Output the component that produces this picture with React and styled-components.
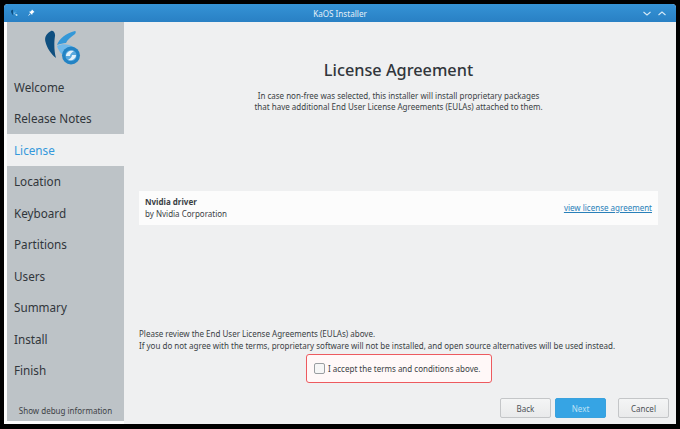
import React from 'react';
import styled, { createGlobalStyle } from 'styled-components';

const Global = createGlobalStyle`
  html, body { margin: 0; padding: 0; background: #000; }
  body { width: 680px; height: 429px; overflow: hidden; font-family: "Noto Sans", "Open Sans", sans-serif; color: #31363b; }
  * { box-sizing: border-box; }
`;
const Screen = styled.div`
  width: 680px; height: 429px; padding: 4px 4px 5px 4px; background: #000;
`;
const Win = styled.div`
  width: 672px; height: 420px; display: flex; flex-direction: column;
  border-radius: 4px 4px 0 0; overflow: hidden; background: #eff0f1;
`;
const TitleBar = styled.div`
  height: 18px; flex: none; display: flex; align-items: center; padding: 0 10px 0 7px;
  background: linear-gradient(#3593d6, #2980c4); color: #e4f0f8; font-size: 8.1px;
`;
const TitleText = styled.div`
  flex: 1; text-align: center; padding-left: 2px;
`;
const TitleIcons = styled.div`
  display: flex; align-items: center; gap: ${p => p.$gap}px;
`;
const Body = styled.div`
  flex: 1; display: flex; min-height: 0; padding: 0 0 3px 3px; background: #fcfcfc;
`;
const Sidebar = styled.div`
  width: 117px; flex: none; background: #bdc3c7; display: flex; flex-direction: column;
`;
const LogoWrap = styled.div`
  height: 49px; display: flex; justify-content: center; align-items: flex-start; padding: 6px 3px 0 0;
`;
const NavItem = styled.div`
  height: 31.5px; display: flex; align-items: center; padding-left: 7px; font-size: 11.7px;
  background: ${p => p.$active ? '#eff0f1' : 'transparent'};
  color: ${p => p.$active ? '#3498db' : '#31363b'};
`;
const Debug = styled.div`
  margin-top: auto; height: 22px; display: flex; align-items: center; justify-content: center; font-size: 8px; color: #3d4246;
`;
const Main = styled.div`
  flex: 1; display: flex; flex-direction: column; background: #eff0f1; padding: 0 18px 0 15px; margin-bottom: -3px;
`;
const Heading = styled.h1`
  margin: 35px 0 0; text-align: center; font-size: 16.3px; line-height: 27px; font-weight: 500; color: #31363b;
`;
const Intro = styled.p`
  margin: 6px 0 0; text-align: center; font-size: 8px; line-height: 11px; color: #3a3f44;
`;
const Card = styled.div`
  margin-top: 79px; height: 34px; background: #fcfcfc; display: flex; align-items: center; justify-content: space-between;
  padding: 0 6px; font-size: 8px; line-height: 12px; color: #3a3f44;
`;
const Strong = styled.div`font-weight: 700;`;
const Link = styled.a`
  color: #2980b9; text-decoration: underline;
`;
const Review = styled.p`
  margin: 103px 0 0; font-size: 8px; line-height: 12px; color: #3a3f44; white-space: nowrap;
`;
const AcceptRow = styled.div`display: flex; justify-content: center; margin-top: 2px;`;
const Accept = styled.label`
  width: 186px; height: 29px; border: 1px solid #ed5a5f; border-radius: 3px; background: #fff8f8;
  display: flex; align-items: center; padding-left: 7px; gap: 3px; font-size: 8px; color: #3a3f44; margin-left: 1px;
`;
const Box = styled.span`
  width: 11px; height: 11px; border: 1px solid #9a9ea1; border-radius: 2px; background: #f6f6f6; flex: none;
`;
const Footer = styled.div`
  display: flex; justify-content: flex-end; margin-top: 15px; margin-right: -11px;
`;
const Btn = styled.button`
  width: 51px; height: 20px; margin-left: ${p => p.$gap}px; padding: 0; font: inherit; font-size: 8px; border-radius: 2px;
  border: 1px solid ${p => p.$primary ? '#3aa2de' : '#c4c6c8'};
  background: ${p => p.$primary ? '#36a4e4' : 'linear-gradient(#f4f5f5,#e9eaeb)'};
  color: ${p => p.$primary ? '#bfe2f6' : '#4d5257'};
`;

const Kaos = ({ w, h }) => (
  <svg width={w} height={h} viewBox="0 0 38 37">
    <path d="M6 3 C2 5 -1 9 0.5 14 C2 20 6 26 11 30 C9 23 9 14 10 8 C10.5 5 8 2 6 3Z" fill="#0f4f7f" />
    <path d="M12 17 C14 11 21 5 30 3 C31 3 31 5 30 6 C26 9 22 12 21 15 C18 15 15 16 12 17Z" fill="#3498d8" />
    <path d="M12 18 C17 15 24 16 29 19 C23 20 19 23 18 27 C15 25 13 21 12 18Z" fill="#71b9ea" />
    <circle cx="26" cy="27.5" r="9" fill="#2383c4" />
    <circle cx="26" cy="27.5" r="5.6" fill="#5aa9de" />
    <path d="M21 28 C21 24 25 22 29 23 C27 24 25 26 25 28Z M31 27 C31 31 27 33 23 32 C25 31 27 29 27 27Z" fill="#e2f1fa" />
  </svg>
);
const Pin = () => (
  <svg width="8" height="8" viewBox="0 0 8 8"><path d="M5 0.5 L7.5 3 L6.5 3.4 L5.4 4.5 L5.2 6 L2 2.8 L3.5 2.6 L4.6 1.5Z M2.8 4.6 L0.8 7.2 L3.4 5.2Z" fill="#fff" /></svg>
);
const Chev = ({ up }) => (
  <svg width="8" height="5" viewBox="0 0 8 5"><path d={up ? 'M.5 4 L4 1 L7.5 4' : 'M.5 1 L4 4 L7.5 1'} fill="none" stroke="#d5e9f6" strokeWidth="1.1" /></svg>
);

const steps = ['Welcome', 'Release Notes', 'License', 'Location', 'Keyboard', 'Partitions', 'Users', 'Summary', 'Install', 'Finish'];

export default function App() {
  return (
    <>
      <Global />
      <Screen>
        <Win>
          <TitleBar>
            <TitleIcons $gap={8}><Kaos w={8} h={8} /><Pin /></TitleIcons>
            <TitleText>KaOS Installer</TitleText>
            <TitleIcons $gap={7}><Chev /><Chev up /></TitleIcons>
          </TitleBar>
          <Body>
            <Sidebar>
              <LogoWrap><Kaos w={38} h={37} /></LogoWrap>
              {steps.map(s => <NavItem key={s} $active={s === 'License'}>{s}</NavItem>)}
              <Debug>Show debug information</Debug>
            </Sidebar>
            <Main>
              <Heading>License Agreement</Heading>
              <Intro>In case non-free was selected, this installer will install proprietary packages<br />that have additional End User License Agreements (EULAs) attached to them.</Intro>
              <Card>
                <div><Strong>Nvidia driver</Strong><div>by Nvidia Corporation</div></div>
                <Link>view license agreement</Link>
              </Card>
              <Review>Please review the End User License Agreements (EULAs) above.<br />If you do not agree with the terms, proprietary software will not be installed, and open source alternatives will be used instead.</Review>
              <AcceptRow><Accept><Box />I accept the terms and conditions above.</Accept></AcceptRow>
              <Footer>
                <Btn>Back</Btn>
                <Btn $primary $gap={4}>Next</Btn>
                <Btn $gap={12}>Cancel</Btn>
              </Footer>
            </Main>
          </Body>
        </Win>
      </Screen>
    </>
  );
}
